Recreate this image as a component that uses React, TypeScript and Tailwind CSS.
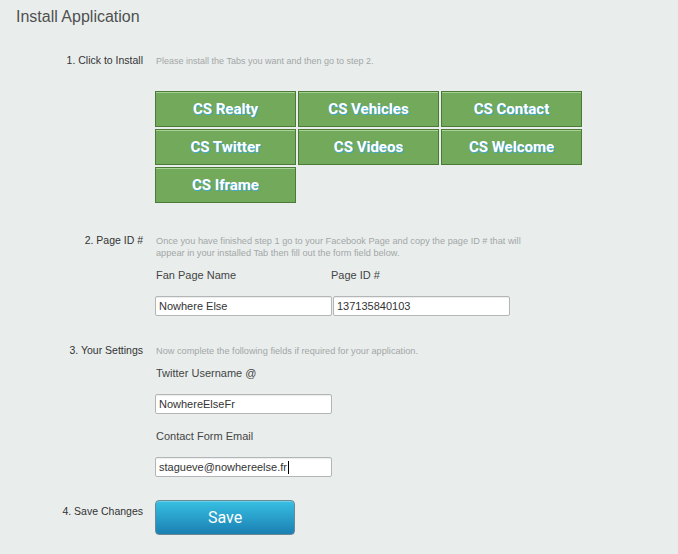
import React from "react";

const tabs = [
  "CS Realty",
  "CS Vehicles",
  "CS Contact",
  "CS Twitter",
  "CS Videos",
  "CS Welcome",
  "CS Iframe",
];

function Field({ value, caret }: { value: string; caret?: boolean }) {
  return (
    <div className="h-[20px] w-[177px] rounded-[2px] border border-[#b3b6b6] bg-white pl-[3px] text-[11px] leading-[18px] text-[#333] shadow-[inset_0_1px_1px_rgba(0,0,0,0.08)] flex items-center">
      <span>{value}</span>
      {caret && <span className="ml-px inline-block h-[13px] w-px bg-black" />}
    </div>
  );
}

export default function App() {
  return (
    <div
      className="min-h-[554px] w-[678px] bg-[#e9eeed] pb-[20px]"
      style={{ fontFamily: '"Liberation Sans", Arial, sans-serif' }}
    >
      <h1 className="pl-[16px] pt-[8px] text-[16px] leading-[17px] font-normal text-[#505050]">
        Install Application
      </h1>

      {/* Step 1 */}
      <div className="mt-[29px] flex items-start">
        <div className="w-[143px] shrink-0 text-right text-[10.5px] leading-[13px] text-[#333]">
          1. Click to Install
        </div>
        <div className="ml-[12px]">
          <p className="pl-px pt-px text-[9px] leading-[12px] text-[#a3a6a6]">
            Please install the Tabs you want and then go to step 2.
          </p>
          <div className="mt-[24px] grid grid-cols-[141px_141px_141px] gap-x-[2px] gap-y-[2px]">
            {tabs.map((t) => (
              <button
                key={t}
                className="flex h-[36px] items-center justify-center border border-[#4b7a37] bg-[#72a95b] text-[15px] font-bold text-white shadow-[inset_0_1px_0_#a6d293] [text-shadow:1px_1px_0_#3fa9d6]"
                style={{ fontFamily: "Roboto, sans-serif" }}
              >
                {t}
              </button>
            ))}
          </div>
        </div>
      </div>

      {/* Step 2 */}
      <div className="mt-[31px] flex items-start">
        <div className="w-[143px] shrink-0 text-right text-[10.5px] leading-[13px] text-[#333]">
          2. Page ID #
        </div>
        <div className="ml-[12px]">
          <p className="w-[370px] pl-px pt-px text-[9.2px] leading-[12px] text-[#a3a6a6]">
            Once you have finished step 1 go to your Facebook Page and copy the page ID # that will appear in your installed Tab then fill out the form field below.
          </p>
          <div className="mt-[9px] grid grid-cols-[176px_177px] text-[11px] leading-[14px] text-[#444]">
            <span className="pl-px">Fan Page Name</span>
            <span>Page ID #</span>
          </div>
          <div className="mt-[14px] flex gap-px">
            <Field value="Nowhere Else" />
            <Field value="137135840103" />
          </div>
        </div>
      </div>

      {/* Step 3 */}
      <div className="mt-[28px] flex items-start">
        <div className="w-[143px] shrink-0 text-right text-[10.5px] leading-[13px] text-[#333]">
          3. Your Settings
        </div>
        <div className="ml-[12px]">
          <p className="pl-px pt-px text-[9.2px] leading-[12px] text-[#a3a6a6]">
            Now complete the following fields if required for your application.
          </p>
          <div className="mt-[9px] pl-px text-[11px] leading-[14px] text-[#444]">
            Twitter Username @
          </div>
          <div className="mt-[14px]">
            <Field value="NowhereElseFr" />
          </div>
          <div className="mt-[15px] pl-px text-[11px] leading-[14px] text-[#444]">
            Contact Form Email
          </div>
          <div className="mt-[14px]">
            <Field value="stagueve@nowhereelse.fr" caret />
          </div>
        </div>
      </div>

      {/* Step 4 */}
      <div className="mt-[23px] flex items-start">
        <div className="w-[143px] shrink-0 pt-[5px] text-right text-[10.5px] leading-[13px] text-[#333]">
          4. Save Changes
        </div>
        <div className="ml-[12px]">
          <button
            className="flex h-[35px] w-[140px] items-center justify-center rounded-[4px] border border-[#6b8897] bg-gradient-to-b from-[#38c0e2] to-[#1b80b3] text-[16px] text-white shadow-[inset_0_1px_0_rgba(255,255,255,0.25)]"
            style={{ fontFamily: "Roboto, sans-serif" }}
          >
            Save
          </button>
        </div>
      </div>
    </div>
  );
}
